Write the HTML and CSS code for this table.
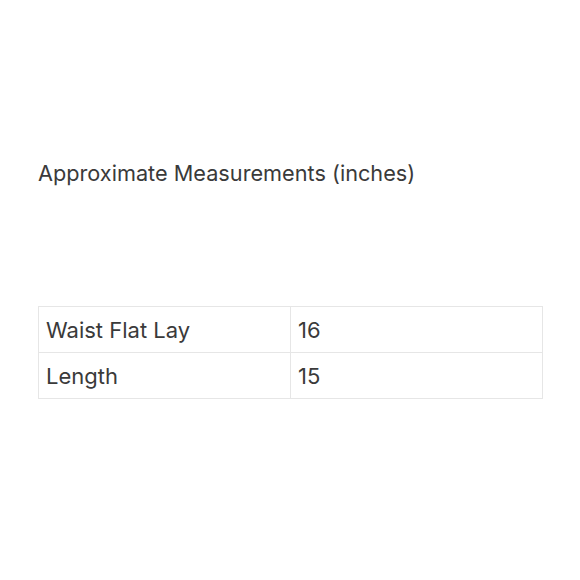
FILE: index.html
```html
<!DOCTYPE html>
<html>
<head>
<meta charset="utf-8">
<link rel="stylesheet" href="styles.css">
</head>
<body>
<main class="page">
  <h1 class="title">Approximate Measurements (inches)</h1>
  <table class="measure">
    <tr><td>Waist Flat Lay</td><td>16</td></tr>
    <tr><td>Length</td><td>15</td></tr>
  </table>
</main>
</body>
</html>
```
FILE: styles.css
```css
html, body {
  margin: 0;
  background: #fff;
}
.page {
  width: 580px;
  height: 580px;
  box-sizing: border-box;
  padding: 157px 38px 0 38px;
  font-family: Inter, "Noto Sans", sans-serif;
  color: #3a3a3a;
}
.title {
  margin: 0;
  font-size: 21.7px;
  font-weight: 400;
  line-height: 32px;
}
.measure {
  margin-top: 117px;
  width: 505px;
  border-collapse: collapse;
  font-size: 22px;
  table-layout: fixed;
}
.measure td {
  border: 1px solid #e6e6e6;
  height: 46px;
  padding: 0 0 0 7px;
  box-sizing: border-box;
}
```
